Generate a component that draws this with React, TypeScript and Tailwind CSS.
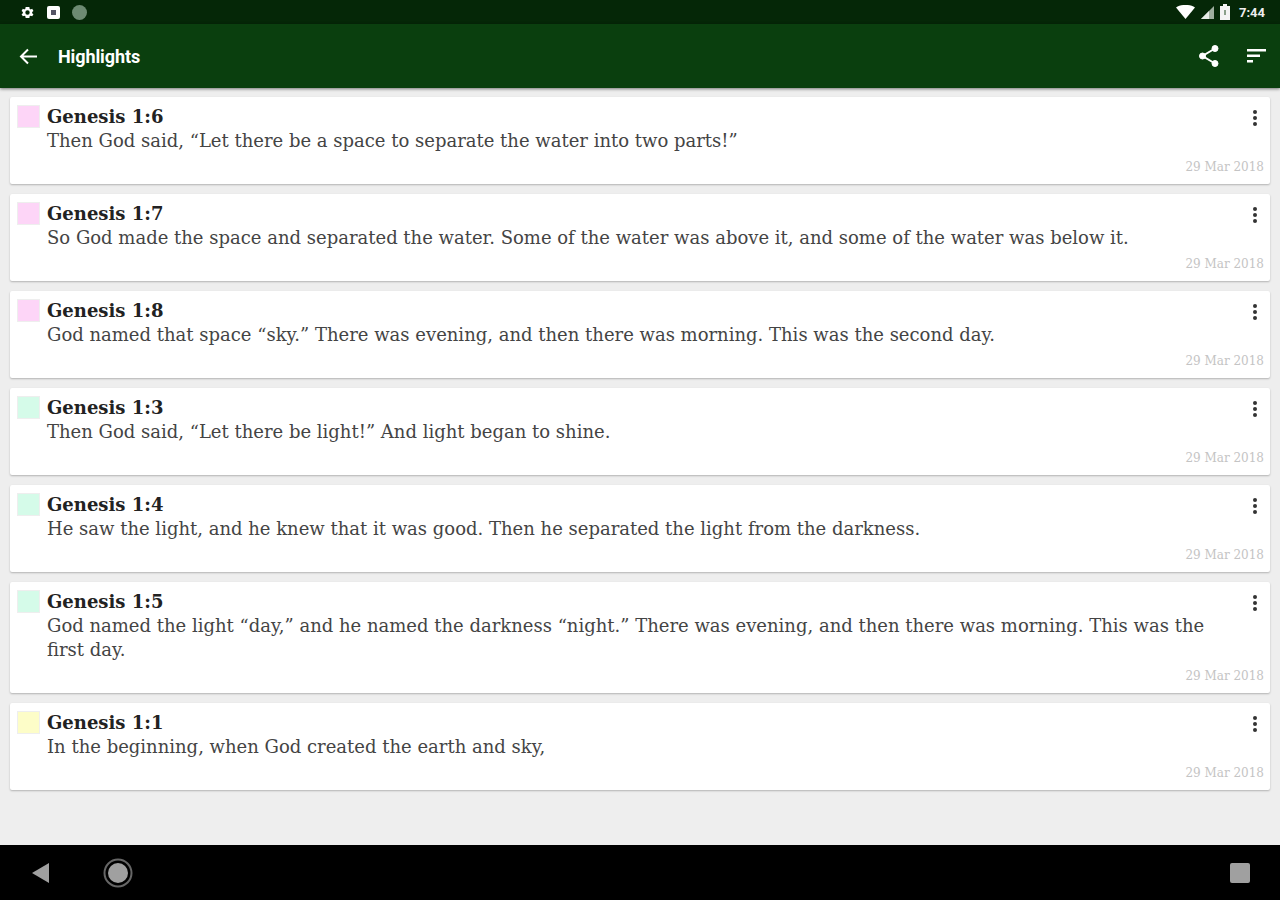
import React from "react";

const items = [
  { ref: "Genesis 1:6", text: "Then God said, “Let there be a space to separate the water into two parts!”", c: "bg-[#fdd5f7]" },
  { ref: "Genesis 1:7", text: "So God made the space and separated the water. Some of the water was above it, and some of the water was below it.", c: "bg-[#fdd5f7]" },
  { ref: "Genesis 1:8", text: "God named that space “sky.” There was evening, and then there was morning. This was the second day.", c: "bg-[#fdd5f7]" },
  { ref: "Genesis 1:3", text: "Then God said, “Let there be light!” And light began to shine.", c: "bg-[#d5fbe9]" },
  { ref: "Genesis 1:4", text: "He saw the light, and he knew that it was good. Then he separated the light from the darkness.", c: "bg-[#d5fbe9]" },
  { ref: "Genesis 1:5", text: "God named the light “day,” and he named the darkness “night.” There was evening, and then there was morning. This was the first day.", c: "bg-[#d5fbe9]" },
  { ref: "Genesis 1:1", text: "In the beginning, when God created the earth and sky,", c: "bg-[#fdfdc8]" },
];

function Card({ it }: { it: (typeof items)[number] }) {
  return (
    <div className="bg-white rounded-[2px] shadow-[0_1px_2px_rgba(0,0,0,0.25)] pl-[7px] pr-[6px] pt-2 pb-[9px] flex gap-[7px]">
      <div className={`w-[23px] h-[23px] mt-0 shrink-0 border border-[#eeeeee] ${it.c}`} />
      <div className="flex-1 min-w-0">
        <div className="flex">
          <div className="flex-1 min-w-0 pr-[27px]">
            <div className="text-[18px] leading-6 font-bold text-[#222] font-['DejaVu_Serif',serif]">{it.ref}</div>
            <div className="text-[18px] leading-6 text-[#444] font-['DejaVu_Serif',serif]">{it.text}</div>
          </div>
          <svg width="6" height="18" viewBox="0 0 6 18" className="mt-[4px] mr-[6px] shrink-0" fill="#333">
            <circle cx="3" cy="3" r="2" />
            <circle cx="3" cy="9" r="2" />
            <circle cx="3" cy="15" r="2" />
          </svg>
        </div>
        <div className="mt-[7px] text-right text-[12px] leading-[15px] text-[#c4c4c4] font-['DejaVu_Serif',serif]">29 Mar 2018</div>
      </div>
    </div>
  );
}

export default function App() {
  return (
    <div className="w-[1280px] h-[900px] flex flex-col overflow-hidden bg-[#eeeeee]">
      <div className="h-6 bg-[#052707] flex items-center justify-between pl-5 pr-[15px] shrink-0">
        <div className="flex items-center gap-[12px]">
          <svg width="15" height="15" viewBox="0 0 24 24" fill="#fff">
            <path d="M19.4 13a7.5 7.5 0 0 0 0-2l2.100-1.600-2-3.400-2.500 1a7.500 7.500 0 0 0-1.700-1L15 3.300h-6L8.600 6a7.500 7.500 0 0 0-1.700 1L4.500 6l-2 3.400L4.600 11a7.500 7.500 0 0 0 0 2l-2.100 1.600 2 3.400 2.400-1a7.500 7.500 0 0 0 1.700 1l.4 2.700h6l.4-2.700a7.500 7.500 0 0 0 1.700-1l2.400 1 2-3.400ZM12 15.500a3.500 3.500 0 1 1 0-7 3.500 3.500 0 0 1 0 7Z" />
          </svg>
          <svg width="13" height="13" viewBox="0 0 13 13">
            <rect width="13" height="13" rx="2" fill="#fff" />
            <rect x="4" y="4" width="5" height="5" fill="#556" />
          </svg>
          <div className="w-[15px] h-[15px] rounded-full bg-[#6d8a72]" />
        </div>
        <div className="flex items-center gap-[6px]">
          <svg width="19" height="14" viewBox="0 0 19 14"><path d="M0 2.500C5-1 14-1 19 2.500L9.500 14Z" fill="#fff" /></svg>
          <svg width="13" height="13" viewBox="0 0 13 13"><path d="M13 0v13H0Z" fill="#9fae9f" /><path d="M8 5v8H0Z" fill="#e8ece8" /></svg>
          <svg width="10" height="16" viewBox="0 0 10 16"><path d="M3 0h4v2h3v14H0V2h3Z" fill="#f4f4f4" /><rect x="4" y="6" width="2" height="5" fill="#8aa08a" /></svg>
          <span className="ml-[3px] text-[13px] leading-none font-bold text-[#eee] font-['Roboto',sans-serif]">7:44</span>
        </div>
      </div>

      <div className="h-16 bg-[#0a3f0e] shadow-[0_1px_3px_rgba(0,0,0,0.5)] flex items-center pl-[19px] pr-[14px] shrink-0 relative z-10">
        <svg width="19" height="19" viewBox="0 0 19 19" fill="none" stroke="#fff" strokeWidth="2">
          <path d="M18 9.500H2M9 2.500 2 9.500l7 7" />
        </svg>
        <div className="ml-5 text-white text-[18px] font-bold font-['Roboto',sans-serif] tracking-[-0.1px] flex-1">Highlights</div>
        <svg width="22" height="24" viewBox="0 0 22 24" fill="#fff" stroke="#fff" className="mr-[27px]">
          <circle cx="17" cy="4.500" r="3" />
          <circle cx="4.500" cy="12" r="3" />
          <circle cx="17" cy="19.500" r="3" />
          <path d="M17 4.500 4.500 12 17 19.500" fill="none" strokeWidth="2" />
        </svg>
        <svg width="19" height="14" viewBox="0 0 19 14" fill="#fff">
          <rect x="0" y="0" width="19" height="2.500" />
          <rect x="0" y="5.500" width="13" height="2.500" />
          <rect x="0" y="11" width="6" height="2.500" />
        </svg>
      </div>

      <div className="flex-1 px-[10px] pt-[9px] flex flex-col gap-[10px] bg-[#eeeeee]">
        {items.map((it) => (
          <Card key={it.ref} it={it} />
        ))}
      </div>

      <div className="h-[55px] bg-black shrink-0 flex items-center justify-between pl-[32px] pr-[30px]">
        <div className="flex items-center gap-[54px]">
          <svg width="17" height="20" viewBox="0 0 17 20"><path d="M17 0v20L0 10Z" fill="#a0a0a0" /></svg>
          <svg width="30" height="30" viewBox="0 0 30 30">
            <circle cx="15" cy="15" r="13.500" fill="none" stroke="#666" strokeWidth="2" />
            <circle cx="15" cy="15" r="10" fill="#a0a0a0" />
          </svg>
        </div>
        <div className="w-[20px] h-[20px] rounded-[2px] bg-[#a0a0a0]" />
      </div>
    </div>
  );
}
